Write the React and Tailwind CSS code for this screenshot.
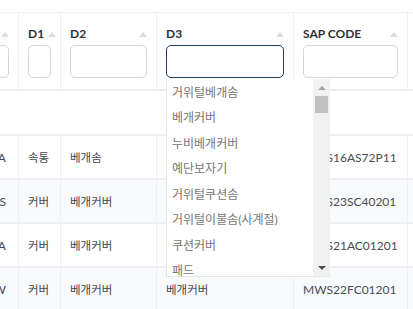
import React from 'react';

const rows = [
    { c0: 'NA', d1: '속통', d2: '베개솜', d3: '', sap: 'MWS16AS72P11', alt: false },
    { c0: 'DS', d1: '커버', d2: '베개커버', d3: '', sap: 'MWS23SC40201', alt: true },
    { c0: 'NA', d1: '커버', d2: '베개커버', d3: '', sap: 'MWS21AC01201', alt: false },
    { c0: 'NW', d1: '커버', d2: '베개커버', d3: '베개커버', sap: 'MWS22FC01201', alt: true },
];

const options = ['거위털베개솜', '베개커버', '누비베개커버', '예단보자기', '거위털쿠션솜', '거위털이불솜(사계절)', '쿠션커버', '패드'];

const cols = 'grid grid-cols-[100px_42px_96px_137px_114px_120px]';

function SortArrow() {
    return <span className="w-0 h-0 border-l-[4px] border-r-[4px] border-b-[5px] border-l-transparent border-r-transparent border-b-[#d9dce1]" />;
}

function HeadCell({ label, focused, right }) {
    return (
        <div className="border-r border-[#eef0f3] px-[9px] pt-[13px] pb-[11px]">
            <div className={'h-[16px] flex items-center gap-[4px] ' + (right ? 'justify-end' : 'justify-between')}>
                {label && <span className="text-[12px] font-bold text-[#2f3237] leading-none">{label}</span>}
                <SortArrow />
            </div>
            <div
                className={
                    'mt-[3px] h-[33px] rounded-[5px] bg-white border ' +
                    (focused ? 'border-[#223d66]' : 'border-[#d3d7de]')
                }
            />
        </div>
    );
}

function Cell({ children, right }) {
    return (
        <div className={'border-r border-[#eef0f3] px-[9px] pt-[2px] flex items-center ' + (right ? 'justify-end pr-[12px]' : '')}>
            {children}
        </div>
    );
}

export default function App() {
    return (
        <div
            className="w-[413px] h-[309px] overflow-hidden bg-white relative text-[#44474c]"
            style={{ fontFamily: 'Lato, "Noto Sans CJK KR", sans-serif' }}
        >
            <div className="pt-[12px] -ml-[81px] w-[609px]">
                {/* header */}
                <div className={cols + ' border-t border-b-2 border-[#eceef1] h-[79px]'}>
                    <HeadCell right />
                    <HeadCell label="D1" />
                    <HeadCell label="D2" />
                    <HeadCell label="D3" focused />
                    <HeadCell label="SAP CODE" />
                    <HeadCell />
                </div>

                {/* empty row */}
                <div className="h-[45px] border-b-2 border-[#eef0f3]" />

                {rows.map((r, i) => (
                    <div
                        key={i}
                        className={cols + ' h-[44px] border-b-2 border-[#eef0f3] ' + (r.alt ? 'bg-[#f9fafb]' : 'bg-white')}
                    >
                        <Cell right>
                            <span className="text-[12px]">{r.c0}</span>
                        </Cell>
                        <Cell>
                            <span className="text-[11.5px]">{r.d1}</span>
                        </Cell>
                        <Cell>
                            <span className="text-[11.5px]">{r.d2}</span>
                        </Cell>
                        <Cell>
                            <span className="text-[11.5px]">{r.d3}</span>
                        </Cell>
                        <Cell>
                            <span className="text-[12px] text-[#4a4d52]">{r.sap}</span>
                        </Cell>
                        <Cell />
                    </div>
                ))}
            </div>

            {/* open dropdown list */}
            <div className="absolute left-[166px] top-[79px] w-[164px] h-[198px] bg-white border-l border-b border-[#e3e5e8] overflow-hidden flex">
                <div className="flex-1 overflow-hidden pt-[1px]">
                    {options.map((o) => (
                        <div key={o} className="h-[25.5px] pl-[5px] flex items-center text-[12px] text-[#767676] whitespace-nowrap">
                            {o}
                        </div>
                    ))}
                </div>
                <div className="w-[17px] h-full bg-[#f1f1f1] flex flex-col items-center">
                    <div className="h-[17px] w-full flex items-center justify-center">
                        <span className="w-0 h-0 border-l-[4px] border-r-[4px] border-b-[4px] border-l-transparent border-r-transparent border-b-[#a3a3a3]" />
                    </div>
                    <div className="w-[13px] h-[17px] bg-[#c1c1c1]" />
                    <div className="flex-1" />
                    <div className="h-[17px] w-full flex items-center justify-center">
                        <span className="w-0 h-0 border-l-[4px] border-r-[4px] border-t-[4px] border-l-transparent border-r-transparent border-t-[#505050]" />
                    </div>
                </div>
            </div>
        </div>
    );
}
